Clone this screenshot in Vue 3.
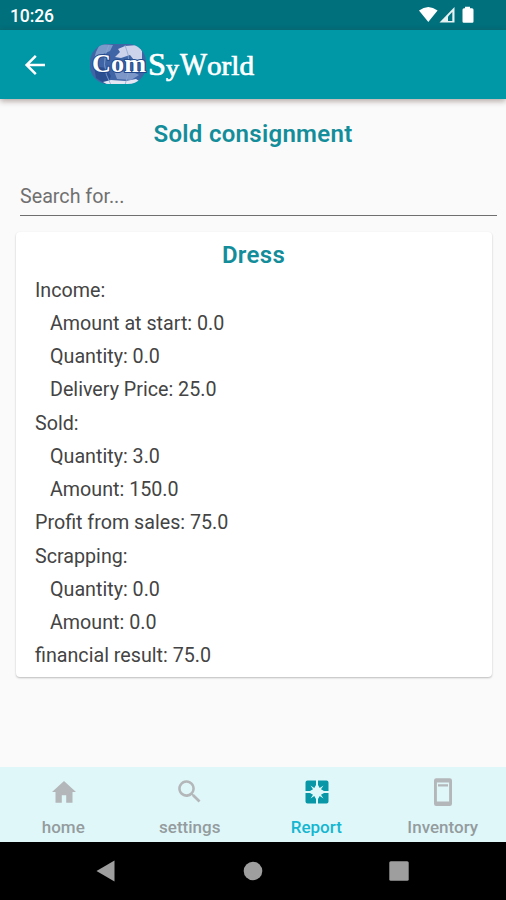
<script setup>
import { ref } from 'vue'

const search = ref('')
const active = ref('Report')

const rows = [
  { label: 'Income:' },
  { label: 'Amount at start:', value: '0.0', sub: true },
  { label: 'Quantity:', value: '0.0', sub: true },
  { label: 'Delivery Price:', value: '25.0', sub: true },
  { label: 'Sold:' },
  { label: 'Quantity:', value: '3.0', sub: true },
  { label: 'Amount:', value: '150.0', sub: true },
  { label: 'Profit from sales:', value: '75.0' },
  { label: 'Scrapping:' },
  { label: 'Quantity:', value: '0.0', sub: true },
  { label: 'Amount:', value: '0.0', sub: true },
  { label: 'financial result:', value: '75.0' }
]

const tabs = [
  { name: 'home', icon: 'M14 3 2 14h3.500v10.700h6.300v-7.500h4.400v7.500h6.300V14H26z' },
  { name: 'settings', icon: 'M18.100 16.300h-1l-.3-.3a8.300 8.300 0 1 0-.9.9l.3.3v1l6.400 6.300 1.900-1.900zM10.500 16.300a5.800 5.800 0 1 1 0-11.600 5.800 5.800 0 0 1 0 11.600z' },
  { name: 'Report', icon: 'M4.500 2.500H13V7L11.300 10 7.500 7.500 10 11.300 7 13H2.500V4.500a2 2 0 0 1 2-2zM15 2.500h8.500a2 2 0 0 1 2 2V13H21l-3-1.700 2.500-3.800-3.800 2.500L15 7zM2.500 15H7l3 1.700-2.500 3.800 3.800-2.500L13 21v4.500H4.500a2 2 0 0 1-2-2zM21 15h4.500v8.500a2 2 0 0 1-2 2H15V21l1.700-3 3.800 2.500-2.500-3.800z' },
  { name: 'Inventory', icon: 'M7.200.2h13.600a2.200 2.200 0 0 1 2.200 2.200v23.400a2.200 2.200 0 0 1-2.200 2.200H7.200A2.200 2.200 0 0 1 5 25.800V2.400A2.200 2.200 0 0 1 7.200.2zM7.900 4.500v19h12.200v-19zM9 6.300h10v2.300H9z' }
]
</script>

<template>
  <div class="screen">
    <div class="status">
      <span class="status__time">10:26</span>
      <svg class="status__icons" width="56" height="18" viewBox="0 0 56 18">
        <path d="M0 4.500Q9.300-2.500 18.600 4.500L9.300 16z" fill="#fff" />
        <path d="M20.500 16.500 35.500 1v15.500z" fill="#fff" fill-opacity=".9" />
        <path d="M29 10.500 33.300 6v9H29z" fill="#007380" />
        <path d="M46 .8h5v1.500h2q1.500 0 1.500 1.500V15.500q0 1.200-1.200 1.200h-8.600q-1.200 0-1.200-1.200V3.800q0-1.500 1.500-1.500h1z" fill="#fff" />
      </svg>
    </div>

    <header class="toolbar">
      <svg class="toolbar__back" width="22" height="22" viewBox="0 0 22 22">
        <path d="M21 11H2.500M11.800 1.800 2.600 11l9.200 9.200" fill="none" stroke="#fff" stroke-width="2.500" />
      </svg>
      <svg class="toolbar__logo" width="170" height="46" viewBox="0 0 170 46">
        <defs>
          <clipPath id="globe"><rect x="1" y="2" width="56" height="40" rx="18" /></clipPath>
        </defs>
        <g clip-path="url(#globe)">
          <path d="M0 0h60v46H0z" fill="#3f65a6" />
          <path d="M11 2 24 3l-3 6-9 4-7 4 2-7z" fill="#7c9ac9" />
          <path d="M29 7 36 4l13-1 4 6v8l-8 1-4-5-9 3-6-1 5-5z" fill="#ccd3ea" />
          <path d="M5 24l12 2 5 8-4 9L7 36z" fill="#2c4f92" />
          <path d="M25 29l19 1 6 3-8 5-14-1z" fill="#7d97c8" />
          <path d="M14 40l8-2 15 1 10-2 3 2-6 4H19z" fill="#e4e6f4" />
          <path d="M20 3Q10 22 22 43M36 3q8 18 0 40" fill="none" stroke="#8ba6d1" stroke-width=".8" />
        </g>
        <g class="logo-com">
          <text x="3" y="30" font-size="26" textLength="19" lengthAdjust="spacingAndGlyphs">C</text>
          <text x="22" y="30" font-size="25" textLength="35" lengthAdjust="spacingAndGlyphs">om</text>
        </g>
        <g class="logo-rest">
          <text x="59" y="33" font-size="32" textLength="18" lengthAdjust="spacingAndGlyphs">S</text>
          <text x="77" y="34" font-size="23" textLength="13" lengthAdjust="spacingAndGlyphs">y</text>
          <text x="91" y="33" font-size="31" textLength="27" lengthAdjust="spacingAndGlyphs">W</text>
          <text x="118" y="33" font-size="27" textLength="47" lengthAdjust="spacingAndGlyphs">orld</text>
        </g>
      </svg>
    </header>

    <main class="content">
      <h1 class="title">Sold consignment</h1>
      <input class="search" v-model="search" placeholder="Search for...">
      <section class="card">
        <h2 class="card__title">Dress</h2>
        <div v-for="(row, index) in rows"
             :key="index" class="card__row"
             :class="{ 'card__row--sub': row.sub }"
        >{{ row.label }} {{ row.value }}</div>
      </section>
    </main>

    <nav class="tabs">
      <div v-for="tab in tabs"
           :key="tab.name" class="tab"
           :class="{ 'tab--active': active === tab.name }"
           @click="active = tab.name"
      >
        <svg class="tab__icon" width="28" height="28" viewBox="0 0 28 28">
          <path :d="tab.icon" fill="currentColor" fill-rule="evenodd" />
        </svg>
        <span class="tab__label">{{ tab.name }}</span>
      </div>
    </nav>

    <div class="system">
      <svg width="20" height="22" viewBox="0 0 20 22"><path d="M.5 11 18.500.5v21z" /></svg>
      <svg width="20" height="20" viewBox="0 0 20 20"><circle cx="10" cy="10" r="9.300" /></svg>
      <svg width="20" height="20" viewBox="0 0 20 20"><rect x=".3" y=".3" width="19.400" height="19.400" rx="1.500" /></svg>
    </div>
  </div>
</template>

<style>
body {
  background-color: #fafafa;
}
</style>

<style scoped>
.screen {
  height: 900px;
  display: flex;
  flex-direction: column;
  overflow: hidden;
  background-color: #fafafa;
  color: #444;
  font-family: Roboto, sans-serif;
}

.status {
  height: 30px;
  flex: none;
  display: flex;
  justify-content: space-between;
  box-sizing: border-box;
  padding: 6px 31px 0 10px;
  background-color: #00707c;
  color: #fff;
}
.status__time {
  font-size: 17.500px;
  line-height: 20px;
  font-weight: 500;
  letter-spacing: -0.1px;
}

.toolbar {
  height: 69px;
  flex: none;
  display: flex;
  align-items: center;
  box-sizing: border-box;
  padding-left: 24px;
  background-color: #0097a7;
  box-shadow: 0 2px 6px rgba(60, 30, 20, 0.4);
}
.toolbar__logo {
  margin-left: 43px;
  font-family: "Liberation Serif", serif;
  fill: #fff;
}
.logo-com {
  font-weight: bold;
  stroke: #23498c;
  stroke-width: 2px;
  paint-order: stroke;
}
.logo-rest {
  stroke: #fff;
  stroke-width: 0.7px;
}

.content {
  flex: 1;
  display: flex;
  flex-direction: column;
}
.title,
.card__title {
  margin: 0;
  font-size: 24px;
  line-height: 28px;
  font-weight: 600;
  letter-spacing: 0.3px;
  text-align: center;
  color: #148d9b;
}
.title {
  margin-top: 21px;
}
.search {
  height: 40px;
  box-sizing: border-box;
  margin: 28px 9px 0 20px;
  padding: 2px 0 0;
  border: 0;
  border-bottom: 1px solid #6f6f6f;
  outline: none;
  background: none;
  color: #444;
  font-family: inherit;
  font-size: 19.700px;
}
.search::placeholder {
  color: #707070;
}

.card {
  margin: 16px 14px 0 16px;
  padding: 9px 20px 4px 19px;
  border-radius: 4px;
  background-color: #fff;
  box-shadow: 0 1px 2px rgba(0, 0, 0, 0.25);
}
.card__title {
  margin-bottom: 4.600px;
}
.card__row {
  font-size: 19.700px;
  line-height: 33.250px;
}
.card__row--sub {
  padding-left: 15px;
}

.tabs {
  height: 75px;
  flex: none;
  display: grid;
  grid-template-columns: repeat(4, 1fr);
  background-color: #e0f7fa;
}
.tab {
  display: flex;
  flex-direction: column;
  align-items: center;
  padding-top: 11px;
  color: #b4b7b9;
}
.tab__icon {
  margin-left: 1px;
}
.tab__label {
  margin-top: 11px;
  font-size: 17px;
  line-height: 20px;
  font-weight: 500;
  color: #949c9e;
}
.tab--active {
  color: #0797a6;
}
.tab--active .tab__label {
  color: #15b6d0;
}

.system {
  height: 58px;
  flex: none;
  display: flex;
  align-items: center;
  justify-content: space-between;
  box-sizing: border-box;
  padding: 0 97px 0 96px;
  background-color: #000;
  fill: #9e9e9e;
}
</style>
